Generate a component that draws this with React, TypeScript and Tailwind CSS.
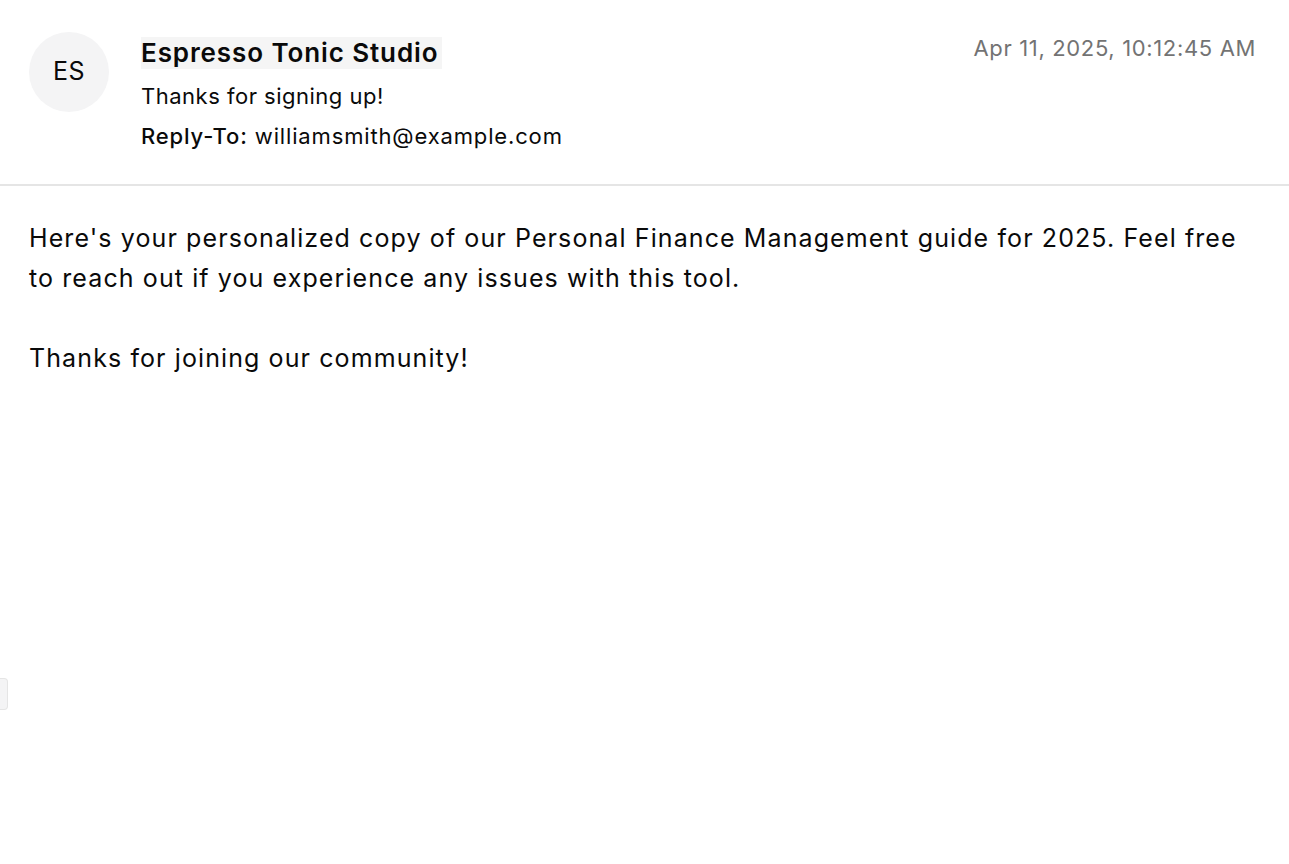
export default function App() {
  return (
    <div
      className="relative min-h-[864px] w-full bg-white text-[#0a0a0a]"
      style={{ fontFamily: "Inter, 'Noto Sans', sans-serif" }}
    >
      {/* Header */}
      <div className="flex items-start justify-between border-b-2 border-[#e5e5e5] pb-[32px] pl-[29px] pr-[33px] pt-[32px]">
        <div className="flex items-start gap-[32px]">
          <div className="flex h-[80px] w-[80px] shrink-0 items-center justify-center rounded-full bg-[#f4f4f5] text-[25px] tracking-[0.5px]">
            ES
          </div>
          <div className="flex flex-col pt-[5px]">
            <div className="w-fit bg-[#f5f5f5] pr-[4px] text-[26px] font-semibold leading-[32px] tracking-[0.9px]">
              Espresso Tonic Studio
            </div>
            <div className="mt-[11px] text-[22px] leading-[32px] tracking-[0.5px]">Thanks for signing up!</div>
            <div className="mt-[8px] text-[22px] leading-[32px] tracking-[0.85px]">
              <span className="font-medium">Reply-To:</span> williamsmith@example.com
            </div>
          </div>
        </div>
        <div className="text-[22px] leading-[32px] tracking-[0.65px] text-[#737373]">
          Apr 11, 2025, 10:12:45 AM
        </div>
      </div>

      {/* Body */}
      <div className="whitespace-pre-wrap px-[29px] pt-[32px] text-[25px] leading-[40px] tracking-[1.1px]">
        {"Here's your personalized copy of our Personal Finance Management guide for 2025. Feel free to reach out if you experience any issues with this tool.\n\nThanks for joining our community!"}
      </div>

      {/* Resize handle */}
      <div className="absolute left-0 top-[678px] h-[32px] w-[8px] rounded-r-[4px] border border-l-0 border-[#e5e5e5] bg-[#f4f4f5]" />
    </div>
  );
}
